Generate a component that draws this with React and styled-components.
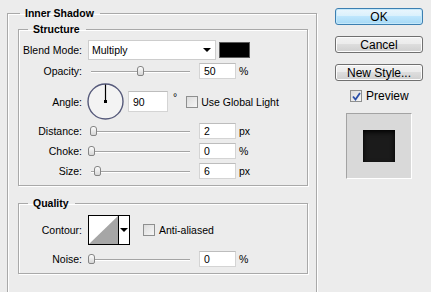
import React from 'react';
import styled, {createGlobalStyle} from 'styled-components';

const Global = createGlobalStyle`
  body {
    margin: 0;
    background: #ececec;
    font-family: "Liberation Sans", Arial, sans-serif;
    color: #000;
  }
`;

const Page = styled.div`
  display: flex;
  align-items: flex-start;
  padding-left: 7px;
  height: 292px;
  overflow: hidden;
`;

const Group = styled.fieldset`
  box-sizing: border-box;
  min-width: 0;
  margin: ${p => p.$outer ? '7px 0 0 0' : `${p.$mt || 0}px 0 0 0`};
  width: ${p => p.$outer ? '310px' : '290px'};
  padding: ${p => p.$outer ? '3px 8px 40px 10px' : `${p.$pt}px 0 ${p.$pb}px 0`};
  border: 1px solid #a9a9a9;
  box-shadow: 1px 1px 0 #fff, inset 1px 1px 0 #fff;
`;

const Legend = styled.legend`
  margin-left: ${p => p.$ml}px;
  padding: 0 6px 0 5px;
  font-size: 10.5px;
  line-height: 13px;
  font-weight: bold;
`;

const Row = styled.div`
  display: flex;
  align-items: center;
  height: ${p => p.$h}px;
  margin-top: ${p => p.$mt || 0}px;
`;

const Label = styled.div`
  width: 63px;
  flex-shrink: 0;
  margin-right: 6px;
  text-align: right;
  font-size: 10.5px;
`;

const Text = styled.span`
  font-size: 10.5px;
  margin-left: ${p => p.$ml || 0}px;
  white-space: nowrap;
`;

const Select = styled.div`
  box-sizing: border-box;
  width: 128px;
  height: 20px;
  background: #fff;
  border: 1px solid #cdcdcd;
  display: flex;
  align-items: center;
  justify-content: space-between;
  padding: 0 3px 0 3px;
  font-size: 10.5px;
`;

const Arrow = styled.span`
  width: 0;
  height: 0;
  border-left: 4px solid transparent;
  border-right: 4px solid transparent;
  border-top: 4px solid #000;
  margin-right: ${p => p.$mr || 0}px;
`;

const Swatch = styled.div`
  box-sizing: border-box;
  width: 31px;
  height: 16px;
  margin-left: 3px;
  background: #000;
  border: 1px solid #5c5c5c;
`;

const SliderBox = styled.div`
  position: relative;
  width: 104px;
  height: 16px;
  flex-shrink: 0;
  &::before {
    content: '';
    position: absolute;
    left: 3px;
    right: 2px;
    top: 8px;
    height: 1px;
    background: #a4a4a4;
    box-shadow: 0 1px 0 #fff;
  }
`;

const Thumb = styled.span`
  position: absolute;
  top: 3px;
  width: 7px;
  height: 10px;
  margin-left: -3px;
  box-sizing: border-box;
  border: 1px solid #858585;
  border-radius: 3px 3px 2px 2px;
  background: linear-gradient(#fdfdfd, #d6d6d6);
`;

const Field = styled.div`
  box-sizing: border-box;
  width: ${p => p.$w || 37}px;
  height: ${p => p.$h || 16}px;
  margin-left: ${p => p.$ml || 7}px;
  background: #fff;
  border: 1px solid #d4d4d4;
  border-top-color: #bdbdbd;
  padding-left: 4px;
  display: flex;
  align-items: center;
  font-size: 10.5px;
`;

const Unit = styled.span`
  font-size: 10.5px;
  margin-left: 3px;
`;

const Degree = styled.span`
  font-size: 10.5px;
  margin-left: 5px;
  align-self: flex-start;
  margin-top: 8px;
`;

const Check = styled.span`
  box-sizing: border-box;
  width: 12px;
  height: 12px;
  flex-shrink: 0;
  margin-left: ${p => p.$ml || 0}px;
  border: 1px solid #8e8f8f;
  background: linear-gradient(135deg, #dcdcdc, #f6f6f6);
  display: flex;
  align-items: center;
  justify-content: center;
`;

const Contour = styled.div`
  box-sizing: border-box;
  width: 42px;
  height: 30px;
  border: 1px solid #000;
  display: flex;
  background: #fff;
`;

const ContourDrop = styled.div`
  flex: 1;
  border-left: 1px solid #000;
  display: flex;
  align-items: center;
  justify-content: center;
`;

const Side = styled.div`
  display: flex;
  flex-direction: column;
  margin-left: 18px;
  padding-top: 8px;
`;

const Button = styled.div`
  box-sizing: border-box;
  width: 88px;
  height: 17px;
  margin-bottom: 11px;
  border: 1px solid ${p => p.$primary ? '#3c7fb1' : '#707070'};
  border-radius: 3px;
  background: ${p => p.$primary
    ? 'linear-gradient(#eaf6fd 0%, #d9f0fc 50%, #bee6fd 50%, #a7d9f5 100%)'
    : 'linear-gradient(#f2f2f2 0%, #ebebeb 50%, #dddddd 50%, #cfcfcf 100%)'};
  box-shadow: inset 0 0 0 1px ${p => p.$primary ? '#c4e8fa' : '#fcfcfc'};
  display: flex;
  align-items: center;
  justify-content: center;
  font-size: 12px;
`;

const PreviewRow = styled.div`
  display: flex;
  align-items: center;
  margin: -3px 0 0 15px;
  font-size: 12px;
  gap: 4px;
`;

const PreviewBox = styled.div`
  box-sizing: border-box;
  width: 66px;
  height: 66px;
  margin: 10px 0 0 11px;
  background: #d9d9d9;
  border: 1px solid #fff;
  border-left-color: #a3a3a3;
  border-top-color: #a3a3a3;
  display: flex;
  align-items: center;
  justify-content: center;
`;

const PreviewSquare = styled.div`
  width: 32px;
  height: 32px;
  background: #1b1b1b;
  box-shadow: inset 0 2px 5px #000;
`;

function Slider({value}) {
  return (
    <SliderBox>
      <Thumb style={{left: `${2.5 + value * 98}px`}} />
    </SliderBox>
  );
}

function SliderRow({label, value, pos, unit, mt}) {
  return (
    <Row $h={16} $mt={mt}>
      <Label>{label}</Label>
      <Slider value={pos} />
      <Field>{value}</Field>
      <Unit>{unit}</Unit>
    </Row>
  );
}

function Dial() {
  return (
    <svg width="37" height="37" viewBox="0 0 37 37" style={{marginLeft: -1, flexShrink: 0}}>
      <circle cx="18.5" cy="18.5" r="17.5" fill="#f3f3f3" stroke="#55597a" strokeWidth="1.4" />
      <line x1="18.5" y1="18.5" x2="18.5" y2="1.5" stroke="#000" strokeWidth="1.2" />
      <rect x="17" y="17" width="3" height="3" fill="#000" />
    </svg>
  );
}

function Tick() {
  return (
    <svg width="9" height="9" viewBox="0 0 9 9">
      <path d="M1 4.5 L3.5 7.5 L8 1" fill="none" stroke="#2b4fa8" strokeWidth="1.8" />
    </svg>
  );
}

export default function App() {
  return (
    <Page>
      <Global />
      <Group $outer>
        <Legend $ml={2}>Inner Shadow</Legend>
        <Group $pt={4} $pb={6}>
          <Legend $ml={9}>Structure</Legend>
          <Row $h={20}>
            <Label>Blend Mode:</Label>
            <Select>
              Multiply
              <Arrow $mr={1} />
            </Select>
            <Swatch />
          </Row>
          <SliderRow label="Opacity:" value="50" pos={0.5} unit="%" mt={3} />
          <Row $h={37} $mt={4}>
            <Label>Angle:</Label>
            <Dial />
            <Field $w={40} $h={21} $ml={4}>90</Field>
            <Degree>°</Degree>
            <Check $ml={9} />
            <Text $ml={3}>Use Global Light</Text>
          </Row>
          <SliderRow label="Distance:" value="2" pos={0.025} unit="px" mt={3} />
          <SliderRow label="Choke:" value="0" pos={0} unit="%" mt={4} />
          <SliderRow label="Size:" value="6" pos={0.07} unit="px" mt={4} />
        </Group>
        <Group $mt={11} $pt={5} $pb={6}>
          <Legend $ml={9}>Quality</Legend>
          <Row $h={30}>
            <Label>Contour:</Label>
            <Contour>
              <svg width="29" height="28" viewBox="0 0 29 28">
                <polygon points="0,28 29,0 29,28" fill="#a6a6a6" />
              </svg>
              <ContourDrop>
                <Arrow />
              </ContourDrop>
            </Contour>
            <Check $ml={13} />
            <Text $ml={4}>Anti-aliased</Text>
          </Row>
          <SliderRow label="Noise:" value="0" pos={0.005} unit="%" mt={6} />
        </Group>
      </Group>
      <Side>
        <Button $primary>OK</Button>
        <Button>Cancel</Button>
        <Button>New Style...</Button>
        <PreviewRow>
          <Check>
            <Tick />
          </Check>
          Preview
        </PreviewRow>
        <PreviewBox>
          <PreviewSquare />
        </PreviewBox>
      </Side>
    </Page>
  );
}
